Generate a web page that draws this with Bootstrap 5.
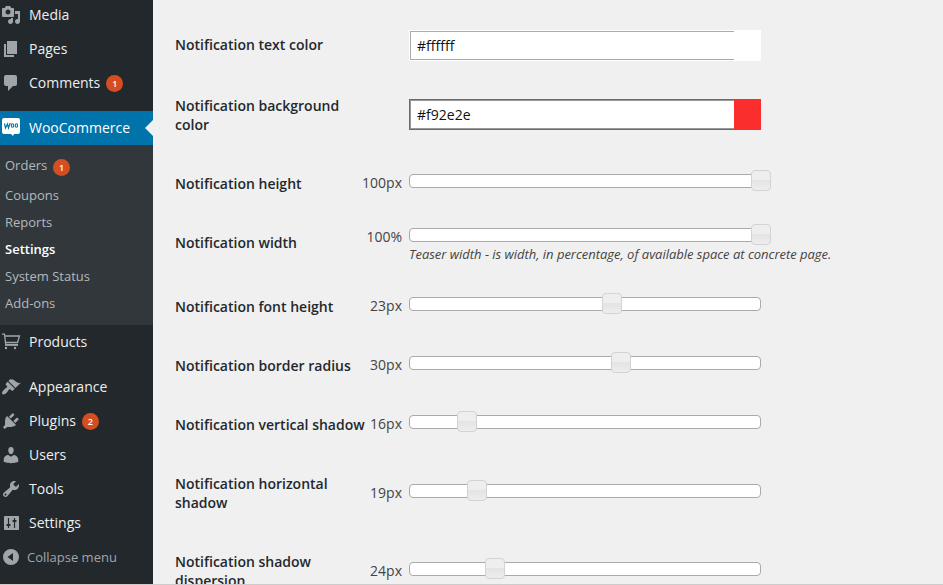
<!DOCTYPE html>
<html lang="en">
<head>
<meta charset="utf-8">
<title>WooCommerce Settings</title>
<link href="https://cdn.jsdelivr.net/npm/bootstrap@5.3.0/dist/css/bootstrap.min.css" rel="stylesheet">
<style>
body{font-family:"Open Sans",sans-serif;font-size:14px;line-height:1.3;background:#f0f0f0;color:#444;height:585px;overflow:hidden}
.shell{height:584px;overflow:hidden}
.baseline{height:1px;background:#ccc}
.side{width:153px;background:#23282d;flex:none}
.side ul{margin:0;padding:0;list-style:none}
.main-menu{margin-top:-2px!important}
.main-menu>li>a{height:34px;color:#eee;padding-left:1px;gap:8px;position:relative}
.main-menu svg{width:20px;height:20px;fill:#a0a5aa;flex:none}
.gap-top{margin-top:11px}
.main-menu>li>a.current{background:#0073aa;color:#fff}
.current::after{content:"";position:absolute;right:0;top:9px;border:8px solid transparent;border-right-color:#f0f0f0;border-left:0}
.side .submenu{background:#32373c;padding:7px 0 8px 5px;font-size:13px}
.submenu a{height:27px;color:#b4b9be}
.submenu a.tall{height:30px;padding-bottom:3px}
.submenu a.on{color:#fff;font-weight:600}
.count{width:17px;height:17px;border-radius:50%;background:#d54e21;color:#fff;font-size:9px;font-weight:600;line-height:17px;text-align:center;margin-left:-2px}
.submenu .count{margin:4px 0 0 6px}
.main-menu>li>a.collapse-link{color:#a0a5aa;font-size:13px;gap:6px}
.options{padding:16px 0 0 22px}
.opt{height:59px}
.opt.h61{height:61px}.opt.h78{height:78px}.opt.h64{height:64px}
.opt-name{width:190px;color:#23282d;font-weight:600;line-height:19px;padding-top:19px;flex:none}
.opt-value{width:37px;flex:none;white-space:nowrap;padding-bottom:2px}
.opt-value.upper{padding-top:14px}
.opt-field{margin-left:7px;width:352px;flex:none}
.field-top{padding-top:14px}
.field-mid{padding-bottom:4px}
.field-hint{padding-bottom:2px}
.swatch{height:31px;padding:1px 27px 1px 1px}
.swatch-white{background:#fff}
.swatch-red{background:#fb2e2e}
.swatch input{width:100%;height:29px;border:1px solid #aaa;border-right:0;background:#fff;color:#111;padding:0 6px;display:block;border-radius:0;outline:0}
.swatch-red input{border-color:#999}
.track{height:14px;border:1px solid #aaa;border-radius:4px;background:#fff;position:relative}
.knob{position:absolute;top:-5px;width:20px;height:21px;margin-left:-10px;border:1px solid #d3d3d3;border-radius:4px;background:linear-gradient(#eee 48%,#e4e4e4 50%,#ededed)}
.slider-line{margin-bottom:7px}
.hint{font-size:13px;letter-spacing:-.02px;font-style:italic;line-height:17px;white-space:nowrap;margin-top:4px}
</style>
</head>
<body>
<div class="shell d-flex">
<nav class="side">
<ul class="main-menu">
<li><a class="d-flex align-items-center text-decoration-none" href="#"><svg viewBox="0 0 20 20"><path d="M13 11V4c0-.55-.45-1-1-1h-1.67L9 1H5L3.67 3H2c-.55 0-1 .45-1 1v7c0 .55.45 1 1 1h10c.55 0 1-.45 1-1zM7 4.5c1.38 0 2.5 1.12 2.5 2.5S8.38 9.5 7 9.5 4.5 8.38 4.5 7 5.62 4.5 7 4.5zM14 6h5v10.5c0 1.38-1.12 2.5-2.5 2.5S14 17.88 14 16.5s1.12-2.5 2.5-2.5c.17 0 .34.02.5.05V9h-3V6zm-4 8.05V13h2v3.5c0 1.38-1.12 2.5-2.5 2.5S7 17.88 7 16.5 8.12 14 9.5 14c.17 0 .34.02.5.05z"/></svg><span>Media</span></a></li>
<li><a class="d-flex align-items-center text-decoration-none" href="#"><svg viewBox="0 0 20 20"><path d="M6 15V2h10v13H6zm-1 1h8v2H3V5h2v11z"/></svg><span>Pages</span></a></li>
<li><a class="d-flex align-items-center text-decoration-none" href="#"><svg viewBox="0 0 20 20"><path d="M5 2h9c1.1 0 2 .9 2 2v7c0 1.1-.9 2-2 2h-2l-5 5v-5H5c-1.1 0-2-.9-2-2V4c0-1.1.9-2 2-2z"/></svg><span>Comments</span><span class="count">1</span></a></li>
<li class="gap-top"><a class="current d-flex align-items-center text-decoration-none" href="#"><svg viewBox="0 0 20 20"><path fill="#fff" d="M3 0h14q2 0 2 2v12q0 2-2 2h-4l-1 2-2-2H3q-2 0-2-2V2q0-2 2-2z"/><path fill="none" stroke="#0073aa" stroke-width="1.2" d="M3.500 5.500l1 4.500 2-4 1 4 1.700-5"/><g fill="none" stroke="#0073aa" stroke-width="1.100"><ellipse cx="11.500" cy="7.500" rx="1.200" ry="1.800"/><ellipse cx="15.400" cy="7.500" rx="1.200" ry="1.800"/></g></svg><span>WooCommerce</span></a>
<ul class="submenu">
<li><a class="tall d-flex align-items-center text-decoration-none" href="#">Orders<span class="count">1</span></a></li>
<li><a class="d-flex align-items-center text-decoration-none" href="#">Coupons</a></li>
<li><a class="d-flex align-items-center text-decoration-none" href="#">Reports</a></li>
<li><a class="on d-flex align-items-center text-decoration-none" href="#">Settings</a></li>
<li><a class="d-flex align-items-center text-decoration-none" href="#">System Status</a></li>
<li><a class="d-flex align-items-center text-decoration-none" href="#">Add-ons</a></li>
</ul></li>
<li><a class="d-flex align-items-center text-decoration-none" href="#"><svg viewBox="0 0 20 20"><path fill="none" stroke="#a0a5aa" stroke-width="1.300" d="M1 2.200h2.500L4.800 13H17M4 4h14.500l-2 6.500H5"/><path d="M4 12h13v1.500H4z"/><circle cx="5" cy="16" r="1.200"/><circle cx="14" cy="16" r="1.200"/></svg><span>Products</span></a></li>
<li class="gap-top"><a class="d-flex align-items-center text-decoration-none" href="#"><svg viewBox="0 0 20 20"><path d="M14.480 11.060L7.410 3.990l1.500-1.500c.5-.56 2.300-.47 3.510.32 1.210.8 1.430 1.280 2.910 2.100 1.180.64 2.450 1.260 4.450.85zm-.71.71L6.700 4.700 4.930 6.470c-.39.39-.39 1.020 0 1.410l1.060 1.060c.39.39.39 1.030 0 1.420-.6.6-1.430 1.110-2.210 1.690-.35.26-.7.53-1.010.84C1.430 14.230.4 16.080 1.400 17.070c.99 1 2.840-.03 4.180-1.360.31-.31.58-.66.85-1.020.57-.78 1.080-1.610 1.690-2.210.39-.39 1.020-.39 1.410 0l1.060 1.060c.39.39 1.020.39 1.410 0z"/></svg><span>Appearance</span></a></li>
<li><a class="d-flex align-items-center text-decoration-none" href="#"><svg viewBox="0 0 20 20"><path d="M13.110 4.360L9.870 7.600 8 5.730l3.240-3.240c.35-.34 1.050-.2 1.560.32.52.51.66 1.210.31 1.550zm-8 1.770l.91-1.120 9.010 9.010-1.190.84c-.71.71-2.630 1.160-3.820 1.160H6.140L4.900 17.260c-.59.59-1.540.59-2.120 0-.59-.58-.59-1.530 0-2.120l1.240-1.240v-3.880c0-1.130.4-3.190 1.090-3.890zm7.260 3.970l3.240-3.240c.34-.35 1.040-.21 1.550.31.52.51.66 1.210.31 1.550l-3.240 3.250z"/></svg><span>Plugins</span><span class="count">2</span></a></li>
<li><a class="d-flex align-items-center text-decoration-none" href="#"><svg viewBox="0 0 20 20"><path d="M10 9.250c-2.270 0-2.730-3.440-2.730-3.440C7 4.020 7.820 2 9.970 2c2.160 0 2.980 2.020 2.710 3.810 0 0-.41 3.440-2.680 3.440zm0 2.570L12.720 10c2.390 0 4.520 2.330 4.520 4.530v2.490s-3.650 1.130-7.240 1.130c-3.650 0-7.240-1.130-7.240-1.130v-2.490c0-2.250 1.940-4.480 4.470-4.480z"/></svg><span>Users</span></a></li>
<li><a class="d-flex align-items-center text-decoration-none" href="#"><svg viewBox="0 0 20 20"><path d="M16.680 9.770c-1.340 1.340-3.300 1.670-4.950.99l-5.410 6.520c-.99.99-2.590.99-3.580 0s-.99-2.590 0-3.570l6.520-5.420c-.68-1.650-.35-3.610.99-4.950 1.280-1.280 3.120-1.620 4.720-1.060l-2.890 2.890 2.820 2.820 2.860-2.870c.53 1.580.18 3.390-1.080 4.650zM3.810 16.210c.4.39 1.040.39 1.430 0 .4-.4.4-1.040 0-1.430-.39-.4-1.030-.4-1.430 0-.39.39-.39 1.030 0 1.430z"/></svg><span>Tools</span></a></li>
<li><a class="d-flex align-items-center text-decoration-none" href="#"><svg viewBox="0 0 20 20"><rect x="3" y="3" width="15" height="14" rx=".7"/><path fill="none" stroke="#23282d" stroke-width="1.200" d="M7.500 5v10M13.500 5v10"/><path stroke="#23282d" stroke-width="2" stroke-linecap="round" d="M6.300 12h2.400M12.300 8h2.400"/></svg><span>Settings</span></a></li>
<li><a class="collapse-link d-flex align-items-center text-decoration-none" href="#"><svg viewBox="0 0 20 20"><path fill-rule="evenodd" d="M10 2a8 8 0 1 0 0 16a8 8 0 1 0 0-16zM12 6v8l-5.500-4z"/></svg><span>Collapse menu</span></a></li>
</ul>
</nav>
<main class="options flex-grow-1">
<div class="opt h61 d-flex"><label class="opt-name" for="c1">Notification text color</label><div class="opt-value"></div><div class="opt-field field-top"><div class="swatch swatch-white"><input id="c1" type="text" value="#ffffff"></div></div></div>
<div class="opt h78 d-flex"><label class="opt-name" for="c2">Notification background color</label><div class="opt-value"></div><div class="opt-field field-mid align-self-center"><div class="swatch swatch-red"><input id="c2" type="text" value="#f92e2e"></div></div></div>
<div class="opt d-flex"><div class="opt-name">Notification height</div><div class="opt-value d-flex justify-content-end align-items-center">100px</div><div class="opt-field align-self-center"><div class="track slider-line"><span class="knob" style="left:100.3%"></span></div></div></div>
<div class="opt h64 d-flex"><div class="opt-name">Notification width</div><div class="opt-value upper d-flex justify-content-end align-items-start">100%</div><div class="opt-field field-hint align-self-center"><div class="track"><span class="knob" style="left:100.3%"></span></div><div class="hint">Teaser width - is width, in percentage, of available space at concrete page.</div></div></div>
<div class="opt d-flex"><div class="opt-name">Notification font height</div><div class="opt-value d-flex justify-content-end align-items-center">23px</div><div class="opt-field align-self-center"><div class="track slider-line"><span class="knob" style="left:57.6%"></span></div></div></div>
<div class="opt d-flex"><div class="opt-name">Notification border radius</div><div class="opt-value d-flex justify-content-end align-items-center">30px</div><div class="opt-field align-self-center"><div class="track slider-line"><span class="knob" style="left:60.2%"></span></div></div></div>
<div class="opt d-flex"><div class="opt-name">Notification vertical shadow</div><div class="opt-value d-flex justify-content-end align-items-center">16px</div><div class="opt-field align-self-center"><div class="track slider-line"><span class="knob" style="left:16.4%"></span></div></div></div>
<div class="opt h78 d-flex"><div class="opt-name">Notification horizontal shadow</div><div class="opt-value d-flex justify-content-end align-items-center">19px</div><div class="opt-field align-self-center"><div class="track slider-line"><span class="knob" style="left:19.2%"></span></div></div></div>
<div class="opt h78 d-flex"><div class="opt-name">Notification shadow dispersion</div><div class="opt-value d-flex justify-content-end align-items-center">24px</div><div class="opt-field align-self-center"><div class="track slider-line"><span class="knob" style="left:24.4%"></span></div></div></div>
</main>
</div>
<div class="baseline"></div>
<script src="https://cdn.jsdelivr.net/npm/bootstrap@5.3.0/dist/js/bootstrap.bundle.min.js"></script>
</body>
</html>
